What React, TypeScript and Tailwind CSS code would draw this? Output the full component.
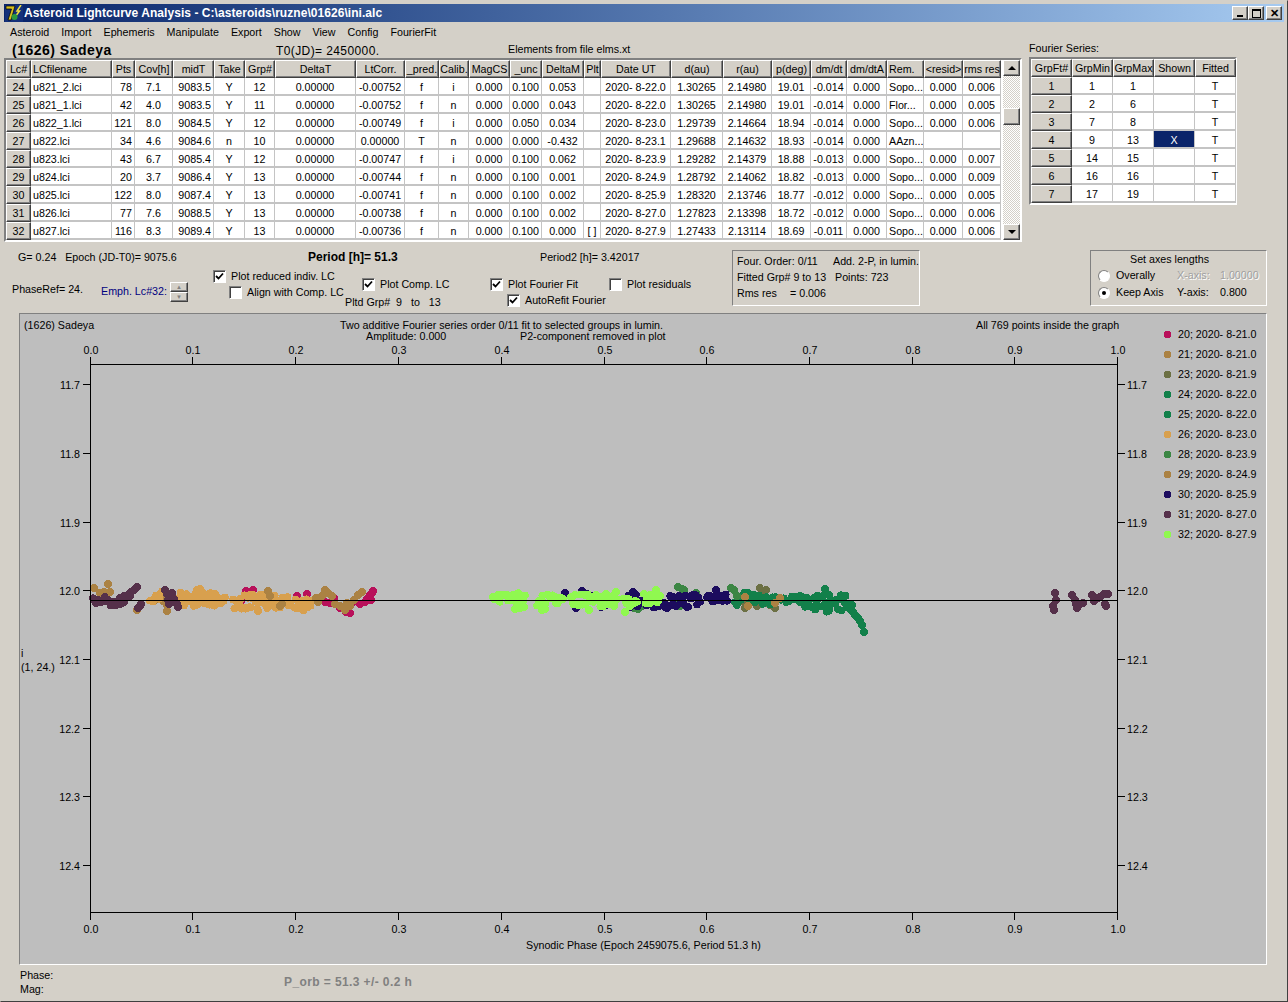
import type { ReactNode } from "react";

const FONT = "font-['Liberation_Sans',Arial,sans-serif]";

const HEAD = ["Lc#", "LCfilename", "Pts", "Cov[h]", "midT", "Take", "Grp#", "DeltaT", "LtCorr.", "_pred.", "Calib.", "MagCS", "_unc", "DeltaM", "Plt", "Date UT", "d(au)", "r(au)", "p(deg)", "dm/dt", "dm/dtA", "Rem.", "<resid>", "rms res"];

const ROWS = [
  ["24", "u821_2.lci", "78", "7.1", "9083.5", "Y", "12", "0.00000", "-0.00752", "f", "i", "0.000", "0.100", "0.053", "", "2020- 8-22.0", "1.30265", "2.14980", "19.01", "-0.014", "0.000", "Sopo...", "0.000", "0.006"],
  ["25", "u821_1.lci", "42", "4.0", "9083.5", "Y", "11", "0.00000", "-0.00752", "f", "n", "0.000", "0.000", "0.043", "", "2020- 8-22.0", "1.30265", "2.14980", "19.01", "-0.014", "0.000", "Flor...", "0.000", "0.005"],
  ["26", "u822_1.lci", "121", "8.0", "9084.5", "Y", "12", "0.00000", "-0.00749", "f", "i", "0.000", "0.050", "0.034", "", "2020- 8-23.0", "1.29739", "2.14664", "18.94", "-0.014", "0.000", "Sopo...", "0.000", "0.006"],
  ["27", "u822.lci", "34", "4.6", "9084.6", "n", "10", "0.00000", "0.00000", "T", "n", "0.000", "0.000", "-0.432", "", "2020- 8-23.1", "1.29688", "2.14632", "18.93", "-0.014", "0.000", "AAzn...", "", ""],
  ["28", "u823.lci", "43", "6.7", "9085.4", "Y", "12", "0.00000", "-0.00747", "f", "i", "0.000", "0.100", "0.062", "", "2020- 8-23.9", "1.29282", "2.14379", "18.88", "-0.013", "0.000", "Sopo...", "0.000", "0.007"],
  ["29", "u824.lci", "20", "3.7", "9086.4", "Y", "13", "0.00000", "-0.00744", "f", "n", "0.000", "0.100", "0.001", "", "2020- 8-24.9", "1.28792", "2.14062", "18.82", "-0.013", "0.000", "Sopo...", "0.000", "0.009"],
  ["30", "u825.lci", "122", "8.0", "9087.4", "Y", "13", "0.00000", "-0.00741", "f", "n", "0.000", "0.100", "0.002", "", "2020- 8-25.9", "1.28320", "2.13746", "18.77", "-0.012", "0.000", "Sopo...", "0.000", "0.005"],
  ["31", "u826.lci", "77", "7.6", "9088.5", "Y", "13", "0.00000", "-0.00738", "f", "n", "0.000", "0.100", "0.002", "", "2020- 8-27.0", "1.27823", "2.13398", "18.72", "-0.012", "0.000", "Sopo...", "0.000", "0.006"],
  ["32", "u827.lci", "116", "8.3", "9089.4", "Y", "13", "0.00000", "-0.00736", "f", "n", "0.000", "0.100", "0.000", "[ ]", "2020- 8-27.9", "1.27433", "2.13114", "18.69", "-0.011", "0.000", "Sopo...", "0.000", "0.006"],
];

const FOURIER = [
  ["1", "1", "1", "", "T"],
  ["2", "2", "6", "", "T"],
  ["3", "7", "8", "", "T"],
  ["4", "9", "13", "X", "T"],
  ["5", "14", "15", "", "T"],
  ["6", "16", "16", "", "T"],
  ["7", "17", "19", "", "T"],
];

const MENU = ["Asteroid", "Import", "Ephemeris", "Manipulate", "Export", "Show", "View", "Config", "FourierFit"];

const LEGEND = [
  ["20; 2020- 8-21.0", "#b8105a"],
  ["21; 2020- 8-21.0", "#ab8243"],
  ["23; 2020- 8-21.9", "#6c7044"],
  ["24; 2020- 8-22.0", "#12804a"],
  ["25; 2020- 8-22.0", "#12804a"],
  ["26; 2020- 8-23.0", "#d8a04e"],
  ["28; 2020- 8-23.9", "#3c8644"],
  ["29; 2020- 8-24.9", "#ab8243"],
  ["30; 2020- 8-25.9", "#1c0c5e"],
  ["31; 2020- 8-27.0", "#55304a"],
  ["32; 2020- 8-27.9", "#90f850"],
];

// scatter n points in a box, repeatable between runs
function band(x0: number, x1: number, y0: number, y1: number, n: number, seed: number) {
  const out: number[][] = [];
  let s = seed * 1237;
  for (let i = 0; i < n; i++) {
    s = (s * 9301 + 49297) % 233280;
    out.push([x0 + ((x1 - x0) * i) / Math.max(n - 1, 1), y0 + ((y1 - y0) * s) / 233280]);
  }
  return out;
}

const POINTS: [string, number[][]][] = [
  ["#b8105a", [[246, 591], [253, 590], [241, 601], [297, 596], [307, 594], [318, 600], [325, 602], [330, 603], [340, 608], [346, 612], [350, 613], [367, 599], [370, 595], [373, 591], [365, 602], [360, 604], [352, 603], [334, 598], [371, 600], [372, 593]]],
  ["#ab8243", [[94, 588], [108, 584], [100, 593], [104, 592], [110, 592], [137, 610], [155, 600], [160, 596], [163, 601], [167, 605], [167, 611]]],
  ["#6c7044", [[760, 588], [762, 592], [764, 597], [758, 600], [770, 605], [745, 608], [750, 603], [757, 606], [775, 608], [743, 601], [766, 590], [772, 598]]],
  ["#12804a", [...band(735, 770, 592, 606, 20, 11), ...band(770, 800, 596, 603, 12, 23), ...band(800, 852, 595, 612, 42, 37), [825, 589], [829, 595], [845, 603], [850, 608], [853, 612], [855, 615], [858, 618], [860, 621], [862, 625], [864, 632]]],
  ["#d8a04e", [...band(150, 162, 591, 603, 9, 5), ...band(178, 225, 592, 606, 40, 7), ...band(233, 290, 594, 609, 46, 13), ...band(294, 312, 599, 612, 14, 17), [197, 590], [200, 589], [250, 595], [258, 611]]],
  ["#3c8644", [[678, 587], [682, 589], [684, 590], [696, 593], [638, 609], [634, 608], [642, 606], [675, 603], [680, 606], [716, 590], [731, 588], [734, 590], [737, 596]]],
  ["#ab8243", [[268, 591], [270, 596], [282, 604], [280, 606], [325, 590], [328, 593], [332, 596], [322, 596], [318, 602], [316, 598], [345, 610], [350, 606], [354, 600], [358, 595], [362, 592], [347, 603], [340, 606], [335, 604], [745, 597], [748, 606], [780, 598], [775, 603]]],
  ["#1c0c5e", [[565, 593], [562, 598], [582, 591], [587, 594], [592, 596], [596, 597], [576, 608], [601, 607], [606, 605], [611, 603], ...band(627, 700, 594, 609, 50, 19), [633, 592], [654, 606], [667, 608], ...band(707, 727, 593, 602, 18, 29), [716, 590]]],
  ["#55304a", [...band(93, 124, 597, 606, 22, 31), [120, 598], [124, 596], [128, 595], [131, 592], [134, 590], [137, 587], [126, 597], [130, 596], [140, 606], [141, 604], [138, 608], [165, 590], [167, 594], [170, 597], [172, 593], [168, 600], [174, 599], [177, 604], [169, 604], [178, 607], [1055, 593], [1056, 600], [1053, 606], [1054, 610], [1072, 595], [1075, 600], [1076, 604], [1078, 606], [1083, 603], [1077, 608], [1092, 595], [1094, 601], [1100, 597], [1104, 594], [1108, 594], [1105, 604], [1106, 606], [1098, 598]]],
  ["#90f850", [...band(493, 525, 593, 605, 20, 41), [515, 609], [520, 608], [524, 607], ...band(537, 563, 594, 606, 16, 43), [542, 610], [545, 609], ...band(571, 617, 594, 607, 34, 47), [589, 610], [606, 594], [616, 592], ...band(624, 637, 597, 605, 7, 53), [625, 612], [630, 606], ...band(644, 660, 593, 604, 12, 59), [656, 590]]],
];

const XTICKS = [91, 193, 296, 399, 502, 605, 707, 810, 913, 1015, 1118];
const YTICKS = [[384, "11.7"], [453, "11.8"], [522, "11.9"], [590, "12.0"], [659, "12.1"], [728, "12.2"], [796, "12.3"], [865, "12.4"]] as const;

function Raised({ children, className = "" }: { children?: ReactNode; className?: string }) {
  return (
    <div className={`flex items-center overflow-hidden whitespace-nowrap border border-t-white border-l-white border-r-[#404040] border-b-[#404040] bg-[#d4d0c8] shadow-[inset_-1px_-1px_0_#808080] ${className} ${className.includes("justify-start") ? "" : "justify-center"}`}>
      {children}
    </div>
  );
}

function Check({ on, label, className = "" }: { on: boolean; label: string; className?: string }) {
  return (
    <div className={`flex h-[13px] items-center ${className}`}>
      <span className="flex h-[13px] w-[13px] shrink-0 items-center justify-center border border-t-[#808080] border-l-[#808080] border-r-white border-b-white bg-white shadow-[inset_1px_1px_0_#404040]">
        {on && (
          <svg width="9" height="9" viewBox="0 0 9 9">
            <path d="M1 4 L3.5 6.5 L8 1.5" fill="none" stroke="#000" strokeWidth="1.8" />
          </svg>
        )}
      </span>
      <span className="ml-[5px] whitespace-nowrap">{label}</span>
    </div>
  );
}

function Radio({ on, label }: { on: boolean; label: string }) {
  return (
    <div className="flex h-[17px] items-center">
      <span className="flex h-[12px] w-[12px] items-center justify-center rounded-full border border-t-[#808080] border-l-[#808080] border-r-white border-b-white bg-white">
        {on && <span className="h-[4px] w-[4px] rounded-full bg-black" />}
      </span>
      <span className="ml-[6px]">{label}</span>
    </div>
  );
}

function Logo() {
  return (
    <svg width="18" height="17" viewBox="0 0 18 17" className="shrink-0">
      <rect width="18" height="17" fill="#14307a" />
      <path d="M1 1 H10 L6 15 H3 L6.5 4 H1 Z" fill="#d8c020" stroke="#000" strokeWidth="0.7" />
      <path d="M16 0 L12 6 L14.5 6 L11.5 10" fill="none" stroke="#f0e040" strokeWidth="1.5" />
      <circle cx="9.5" cy="12" r="3" fill="#2c9a40" />
    </svg>
  );
}

function TitleButton({ children }: { children: ReactNode }) {
  return <Raised className="h-[14px] w-[16px] text-black">{children}</Raised>;
}

function Chart() {
  return (
    <svg width="1132" height="650" viewBox="20 314 1132 650" className="block shrink-0" shapeRendering="crispEdges" fontSize="10.7" fill="#000">
      <text x="24" y="329">(1626) Sadeya</text>
      <text x="340" y="329">Two additive Fourier series order 0/11 fit to selected groups in lumin.</text>
      <text x="366" y="340">Amplitude: 0.000</text>
      <text x="520" y="340">P2-component removed in plot</text>
      <text x="976" y="329">All 769 points inside the graph</text>
      <text x="21" y="657">i</text>
      <text x="21" y="671">(1, 24.)</text>

      {POINTS.map(([color, pts], i) =>
        pts.map(([x, y], j) => <circle key={`${i}-${j}`} cx={x} cy={y} r="3.8" fill={color} />)
      )}

      <path d="M90.5 364.5 H1117.5 V912.5 H90.5 Z M91 600.5 H1117" fill="none" stroke="#000" />
      {XTICKS.map((x, i) => {
        const label = (i / 10).toFixed(1);
        return (
          <g key={x}>
            <path d={`M${x - 0.5} 357 V364 M${x - 0.5} 913 V920`} stroke="#000" />
            <text x={x} y="354" textAnchor="middle">{label}</text>
            <text x={x} y="933" textAnchor="middle">{label}</text>
          </g>
        );
      })}
      {YTICKS.map(([y, label]) => (
        <g key={label}>
          <path d={`M83 ${y + 0.5} H90 M1118 ${y + 0.5} H1125`} stroke="#000" />
          <text x="80" y={y + 5} textAnchor="end">{label}</text>
          <text x="1127" y={y + 5}>{label}</text>
        </g>
      ))}
      <text x="526" y="949">Synodic Phase (Epoch 2459075.6, Period 51.3 h)</text>
    </svg>
  );
}

export default function App() {
  return (
    <div className={`${FONT} h-[1002px] w-[1288px] overflow-hidden border border-t-[#d4d0c8] border-l-[#d4d0c8] border-r-[#404040] border-b-[#404040] bg-[#d4d0c8] p-[3px] text-[10.7px] leading-[13px] text-black`}>
      {/* title bar */}
      <div className="flex h-[18px] items-center bg-gradient-to-r from-[#0a246a] to-[#a6caf0] pl-[1px] pr-[2px]">
        <Logo />
        <span className="ml-[1px] text-[12px] font-bold tracking-[0.05px] text-white">Asteroid Lightcurve Analysis - C:\asteroids\ruzne\01626\ini.alc</span>
        <div className="ml-auto flex">
          <TitleButton><span className="mt-[6px] h-[2px] w-[6px] bg-black" /></TitleButton>
          <TitleButton><span className="h-[9px] w-[9px] border border-t-2 border-black" /></TitleButton>
          <div className="ml-[2px]">
            <TitleButton><span className="text-[11px] font-bold leading-none">✕</span></TitleButton>
          </div>
        </div>
      </div>

      {/* menu */}
      <div className="flex h-[20px] items-center gap-[12px] pl-[6px]">
        {MENU.map((m) => (
          <span key={m}>{m}</span>
        ))}
      </div>

      <div className="flex">
        {/* main grid */}
        <div className="w-[1018px] shrink-0">
          <div className="flex h-[16px] items-end">
            <span className="ml-[8px] w-[264px] text-[14px] font-bold leading-[15px] tracking-[0.5px]">(1626) Sadeya</span>
            <span className="w-[232px] text-[12px] tracking-[0.4px]">T0(JD)= 2450000.</span>
            <span className="mb-[2px]">Elements from file elms.xt</span>
          </div>
          <div className="flex h-[184px] border-2 border-t-[#808080] border-l-[#808080] border-r-white border-b-white bg-white">
            <div className="min-w-0 flex-1">
              <div className="grid grid-cols-[25px_81px_23px_38px_41px_31px_30px_81px_49px_34px_30px_41px_32px_42px_17px_70px_52px_49px_39px_36px_40px_37px_39px_38px] grid-rows-[repeat(10,18px)]">
                {HEAD.map((h) => (
                  <Raised key={h} className={`h-[18px] ${h === "LCfilename" || h === "Rem." ? "justify-start pl-[1px]" : ""}`}>{h}</Raised>
                ))}
                {ROWS.map((row) =>
                  row.map((c, i) =>
                    i === 0 ? (
                      <Raised key={i + row[0]} className="h-[18px] pt-[1px]">{c}</Raised>
                    ) : (
                      <div
                        key={i + row[0]}
                        className={`flex h-[18px] items-center overflow-hidden whitespace-nowrap border-r border-b-2 border-[#c4c4c4] pt-[2px] ${i === 1 || i === 21 ? "justify-start pl-[2px]" : i === 2 || i === 4 ? "justify-end pr-[2px]" : "justify-center"}`}
                      >
                        {c}
                      </div>
                    )
                  )
                )}
              </div>
            </div>
            {/* scrollbar */}
            <div className="flex w-[17px] shrink-0 flex-col bg-[repeating-conic-gradient(#d4d0c8_0_25%,#ffffff_0_50%)] bg-[length:2px_2px]">
              <Raised className="h-[16px] shrink-0">
                <span className="h-0 w-0 border-x-[4px] border-b-[4px] border-x-transparent border-b-black" />
              </Raised>
              <Raised className="mt-[32px] h-[17px] shrink-0" />
              <div className="flex-1" />
              <Raised className="h-[16px] shrink-0">
                <span className="h-0 w-0 border-x-[4px] border-t-[4px] border-x-transparent border-t-black" />
              </Raised>
            </div>
          </div>
        </div>

        {/* fourier grid */}
        <div className="ml-[7px] w-[208px]">
          <div className="flex h-[14px] items-start">Fourier Series:</div>
          <div className="mt-[1px] grid w-[208px] grid-cols-[41px_41px_41px_41px_41px] border-2 border-t-[#808080] border-l-[#808080] border-r-white border-b-white bg-white">
            {["GrpFt#", "GrpMin", "GrpMax", "Shown", "Fitted"].map((h) => (
              <Raised key={h} className="h-[18px]">{h}</Raised>
            ))}
            {FOURIER.map((row) =>
              row.map((c, i) =>
                i === 0 ? (
                  <Raised key={i + row[0]} className="h-[18px] pt-[1px]">{c}</Raised>
                ) : (
                  <div
                    key={i + row[0]}
                    className={`flex h-[18px] items-center justify-center border-r border-b-2 border-[#c4c4c4] pt-[2px] ${c === "X" ? "bg-[#0a246a] text-white" : ""}`}
                  >
                    {c}
                  </div>
                )
              )
            )}
          </div>
        </div>
      </div>

      {/* controls */}
      <div className="flex h-[71px]">
        <div className="flex w-[728px] shrink-0 flex-col">
          <div className="flex h-[26px] pl-[14px] pt-[9px]">
            <span className="w-[290px] whitespace-pre">G= 0.24   Epoch (JD-T0)= 9075.6</span>
            <span className="w-[232px] text-[12px] font-bold">Period [h]= 51.3</span>
            <span>Period2 [h]= 3.42017</span>
          </div>
          <div className="flex">
            <div className="mt-[14px] flex h-[20px] w-[209px] shrink-0 items-center">
              <span className="mb-[6px] ml-[8px] w-[89px]">PhaseRef= 24.</span>
              <span className="mb-[2px] text-[#000080]">Emph. Lc#32:</span>
              <div className="ml-[3px] flex flex-col">
                <Raised className="h-[10px] w-[18px] text-[6px] text-[#808080]">▲</Raised>
                <Raised className="h-[10px] w-[18px] text-[6px] text-[#808080]">▼</Raised>
              </div>
            </div>
            <div className="w-[132px] shrink-0 pt-[2px]">
              <Check on label="Plot reduced indiv. LC" />
              <Check on={false} label="Align with Comp. LC" className="ml-[16px] mt-[3px]" />
            </div>
            <div className="w-[145px] shrink-0 pt-[10px]">
              <Check on label="Plot Comp. LC" className="ml-[17px]" />
              <div className="mt-[5px] whitespace-pre">Pltd Grp#  9   to   13</div>
            </div>
            <div className="w-[119px] shrink-0 pt-[10px]">
              <Check on label="Plot Fourier Fit" />
              <Check on label="AutoRefit Fourier" className="ml-[17px] mt-[3px]" />
            </div>
            <div className="w-[123px] shrink-0 pt-[10px]">
              <Check on={false} label="Plot residuals" />
            </div>
          </div>
        </div>
        <div className="mt-[8px] h-[56px] w-[188px] shrink-0 whitespace-nowrap border border-t-[#808080] border-l-[#808080] border-r-white border-b-white pl-[4px] pt-[2px] leading-[16px]">
          <div className="flex"><span className="w-[62px]">Four. Order:</span><span className="w-[36px]">0/11</span><span>Add. 2-P, in lumin.</span></div>
          <div className="flex"><span className="w-[98px]">Fitted Grp# 9 to 13</span><span>Points: 723</span></div>
          <div className="flex"><span className="w-[53px]">Rms res</span><span>= 0.006</span></div>
        </div>
        <div className="ml-[170px] mt-[8px] h-[56px] w-[177px] shrink-0 whitespace-nowrap border border-t-[#808080] border-l-[#808080] border-r-white border-b-white pl-[7px]">
          <div className="pl-[32px] leading-[16px]">Set axes lengths</div>
          <div className="flex">
            <div className="w-[79px]">
              <Radio on={false} label="Overally" />
              <Radio on label="Keep Axis" />
            </div>
            <div className="flex w-[87px] flex-col">
              <div className="flex h-[17px] items-center text-[#a0a0a0] [text-shadow:1px_1px_0_#fff]"><span className="w-[43px]">X-axis:</span><span>1.00000</span></div>
              <div className="flex h-[17px] items-center"><span className="w-[43px]">Y-axis:</span><span>0.800</span></div>
            </div>
          </div>
        </div>
      </div>

      {/* plot panel */}
      <div className="ml-[15px] flex h-[652px] w-[1248px] border border-t-[#808080] border-l-[#808080] border-r-white border-b-white bg-[#bebebe]">
        <Chart />
        <div className="flex flex-col pl-[12px] pt-[10px]">
          {LEGEND.map(([label, color]) => (
            <div key={label} className="flex h-[20px] items-center whitespace-nowrap">
              <svg width="7" height="7" viewBox="0 0 7 7" shapeRendering="crispEdges">
                <circle cx="3.5" cy="3.5" r="3.6" fill={color} />
              </svg>
              <span className="ml-[7px]">{label}</span>
            </div>
          ))}
        </div>
      </div>

      {/* status */}
      <div className="flex pt-[3px]">
        <div className="ml-[16px] w-[264px] leading-[14px]">
          <div>Phase:</div>
          <div>Mag:</div>
        </div>
        <div className="pt-[8px] text-[12px] font-bold tracking-[0.4px] text-[#808080]">P_orb = 51.3 +/- 0.2 h</div>
      </div>
    </div>
  );
}
